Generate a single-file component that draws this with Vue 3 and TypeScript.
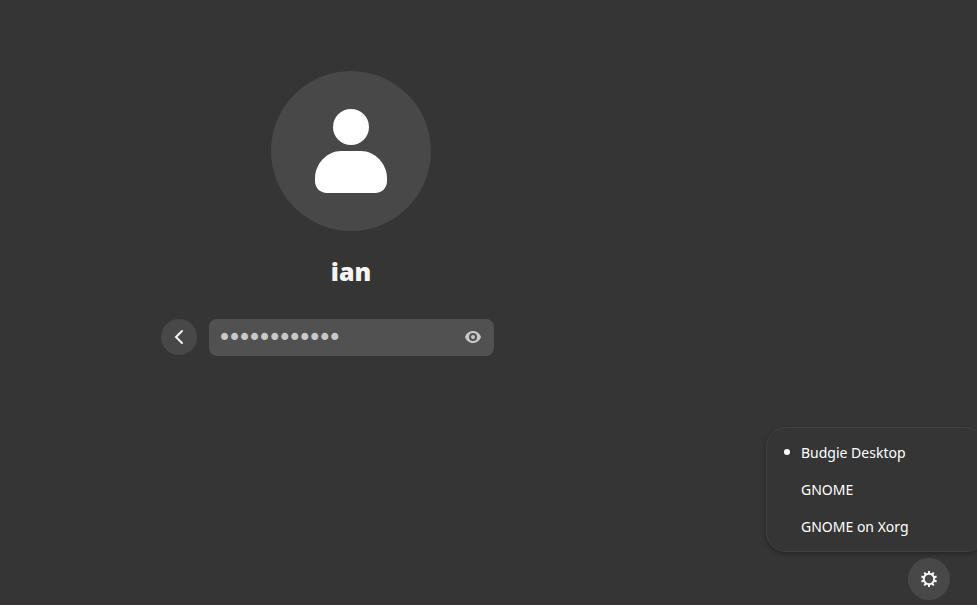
<script setup lang="ts">
import { ref } from 'vue'

const sessions: string[] = ['Budgie Desktop', 'GNOME', 'GNOME on Xorg']
const selected = ref<string>('Budgie Desktop')
const menuOpen = ref<boolean>(true)
const password = ref<string>('abcdefghijkl')
const revealed = ref<boolean>(false)

function choose(session: string): void {
  selected.value = session
}
</script>

<template>
  <div class="screen">
    <main class="login">
      <div class="avatar">
        <svg viewBox="0 0 160 160" aria-hidden="true">
          <circle cx="80" cy="56" r="18" />
          <path d="M70 80H90C104 80 116 93 116 107V110C116 117 111 122 104 122H56C49 122 44 117 44 110V107C44 93 56 80 70 80Z" />
        </svg>
      </div>
      <h1 class="name">ian</h1>
      <form class="prompt" @submit.prevent>
        <button class="round back" type="button" aria-label="Back">
          <svg viewBox="0 0 16 16" aria-hidden="true">
            <path d="M11 2L5 8L11 14" />
          </svg>
        </button>
        <div class="field">
          <input v-model="password" :type="revealed ? 'text' : 'password'" aria-label="Password" />
          <button class="peek" type="button" aria-label="Show password" @click="revealed = !revealed">
            <svg viewBox="0 0 16 16" aria-hidden="true">
              <path fill-rule="evenodd" d="M8 2C4.2 2 1.2 4.5 0 8C1.2 11.5 4.2 14 8 14S14.800 11.500 16 8C14.800 4.500 11.800 2 8 2ZM8 4A4 4 0 1 1 8 12A4 4 0 1 1 8 4Z" />
              <circle cx="8" cy="8" r="2" />
            </svg>
          </button>
        </div>
      </form>
    </main>

    <footer class="corner">
      <div class="session">
        <div v-if="menuOpen" class="menu" role="menu" aria-label="Session">
          <button
            v-for="session in sessions"
            :key="session"
            class="item"
            type="button"
            role="menuitemradio"
            :aria-checked="session === selected"
            @click="choose(session)"
          >
            <span class="mark" :class="{ on: session === selected }"></span>
            <span>{{ session }}</span>
          </button>
        </div>
        <button class="round gear" type="button" aria-label="Choose session" @click="menuOpen = !menuOpen">
          <svg viewBox="0 0 16 16" aria-hidden="true">
            <circle class="ring" cx="8" cy="8" r="5.2" />
            <g class="teeth">
              <path v-for="n in 10" :key="n" d="M7 0H9V3H7Z" :transform="`rotate(${(n - 1) * 36} 8 8)`" />
            </g>
          </svg>
        </button>
      </div>
    </footer>
  </div>
</template>

<style>
body {
  margin: 0;
  background: #353535;
}
</style>

<style scoped>
.screen {
  box-sizing: border-box;
  min-height: 100vh;
  display: flex;
  flex-direction: column;
  justify-content: space-between;
  overflow: hidden;
  background: #353535;
  border-bottom: 1px solid #3a3338;
  color: #fff;
  font-family: "Noto Sans", "Open Sans", sans-serif;
}

button {
  border: 0;
  padding: 0;
  background: none;
  color: inherit;
  font: inherit;
  cursor: pointer;
}

svg {
  display: block;
}

.login {
  display: flex;
  flex-direction: column;
  align-items: center;
  padding: 71px 275px 0 0;
}

.avatar {
  width: 160px;
  border-radius: 50%;
  background: #484848;
  fill: #fff;
}

.name {
  margin: 22px 0 30px;
  font-size: 25px;
  line-height: 36px;
  font-weight: 900;
  color: #f6f5f4;
}

.prompt {
  display: flex;
  gap: 12px;
  padding-right: 48px;
}

.round {
  display: grid;
  place-items: center;
  flex: none;
  border-radius: 50%;
  background: #484848;
}

.back {
  width: 36px;
  height: 36px;
}

.back svg {
  width: 16px;
  fill: none;
  stroke: #f6f5f4;
  stroke-width: 2;
  stroke-linecap: round;
}

.field {
  box-sizing: border-box;
  display: flex;
  align-items: center;
  width: 285px;
  height: 37px;
  padding: 0 13px 1px 11px;
  border-radius: 8px;
  background: #515151;
  color: #c8c8c8;
}

.field input {
  flex: 1;
  min-width: 0;
  padding: 0;
  border: 0;
  outline: 0;
  background: none;
  color: inherit;
  font: 17px "DejaVu Sans", sans-serif;
}

.field input[type="password"] {
  -webkit-text-stroke: 2px #c8c8c8;
}

.peek svg {
  width: 16px;
  fill: #c8c8c8;
}

.corner {
  display: flex;
  justify-content: flex-end;
  padding: 0 27px 4px 0;
}

.session {
  position: relative;
}

.gear {
  width: 42px;
  height: 42px;
}

.gear svg {
  width: 16px;
  fill: #f6f5f4;
}

.gear .ring {
  fill: none;
  stroke: #f6f5f4;
  stroke-width: 2;
}

.menu {
  position: absolute;
  right: -36px;
  bottom: 48px;
  box-sizing: border-box;
  width: 220px;
  padding: 6px;
  border: 1px solid #424242;
  border-radius: 20px;
  background: #353535;
  box-shadow: 0 2px 5px rgba(0, 0, 0, 0.3);
}

.item {
  display: flex;
  align-items: center;
  gap: 11px;
  width: 100%;
  height: 37px;
  padding: 0 0 1px 11px;
  font-size: 14px;
  white-space: nowrap;
}

.mark {
  width: 6px;
  height: 6px;
  border-radius: 50%;
}

.mark.on {
  background: #fff;
}
</style>
